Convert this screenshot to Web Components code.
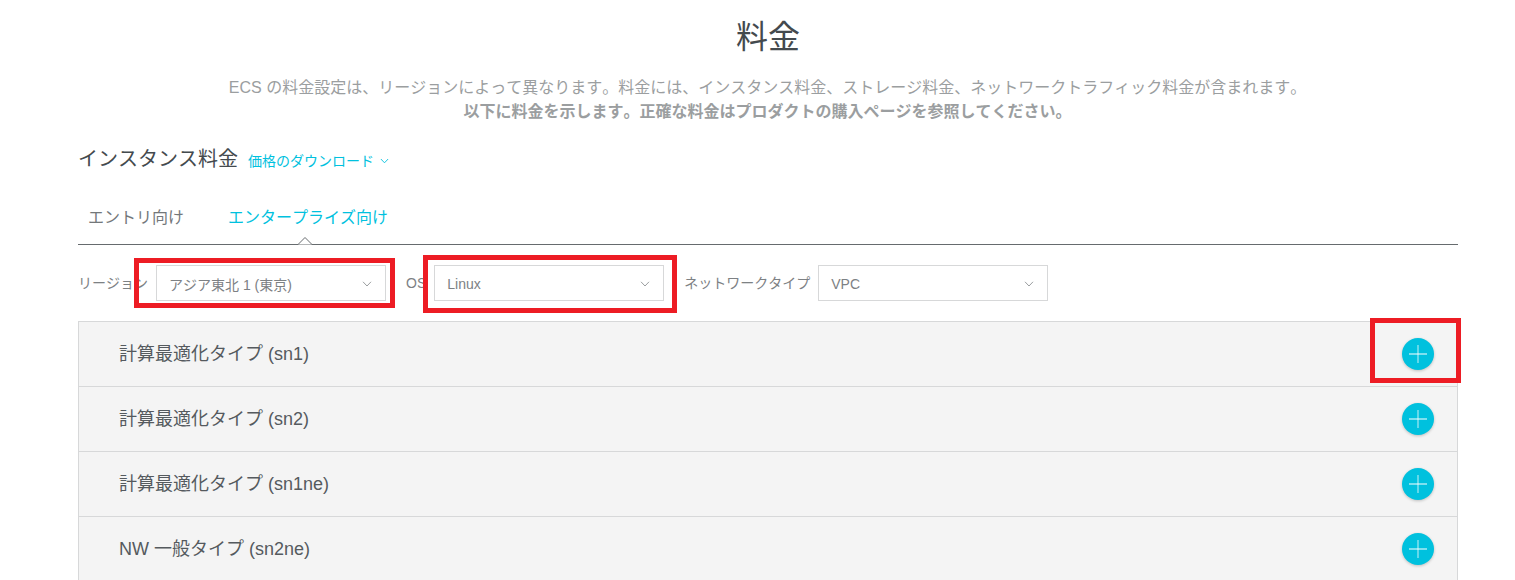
<!DOCTYPE html>
<html lang="ja">
<head>
<meta charset="utf-8">
<style>
html,body{margin:0;padding:0;background:#fff;overflow:hidden;height:580px}
body{font-family:"Liberation Sans","Noto Sans CJK JP",sans-serif;color:#373d41;font-kerning:none}
</style>
</head>
<body>
<pricing-page></pricing-page>
<script>
const chevron = (w,h,c)=>`<svg width="${w}" height="${h}" viewBox="0 0 10 6" fill="none" stroke="${c}" stroke-width="1"><path d="M1 .8 5 5 9 .8"/></svg>`;

class PriceSelect extends HTMLElement{
  constructor(){super();this.attachShadow({mode:'open'}).innerHTML=`<style>
  :host{display:flex;align-items:center;gap:8px;font-size:14px;color:#7d8184}
  .label{white-space:nowrap;line-height:20px}
  .box{box-sizing:border-box;width:230px;height:36px;border:1px solid #d7d8d9;background:#fff;display:flex;align-items:center;justify-content:space-between;padding:0 13px 0 12px;font-size:14px;color:#7d8184}
  .box span{padding-top:1px}
  svg{display:block;margin-top:1px}
  </style><span class="label"><slot name="label"></slot></span><div class="box"><span><slot></slot></span>${chevron(10,6,'#9b9ea0')}</div>`;}
}
class PriceRow extends HTMLElement{
  constructor(){super();this.attachShadow({mode:'open'}).innerHTML=`<style>
  :host{display:flex;box-sizing:border-box;height:65px;align-items:center;justify-content:space-between;padding:0 23px 0 40px;background:#f4f4f4;border-bottom:1px solid #d7d8d9;font-size:18px;color:#555a5e}
  .text{padding-bottom:4px}
  .plus{width:32px;height:32px;border-radius:50%;background:#00c1de;box-shadow:0 1px 3px rgba(0,0,0,.22);display:flex;align-items:center;justify-content:center}
  svg{display:block}
  </style><span class="text"><slot></slot></span><div class="plus"><svg width="18" height="18" viewBox="0 0 18 18"><path d="M9 0v18" stroke="#8fe3f0" stroke-width="1.4"/><path d="M0 9h18" stroke="#fff" stroke-width="1"/></svg></div>`;}
}
class RedBox extends HTMLElement{
  constructor(){super();this.attachShadow({mode:'open'}).innerHTML=`<style>
  :host{position:absolute;box-sizing:border-box;border:5px solid #ed1c24;display:block;pointer-events:none}
  </style>`;}
}
class PriceTabs extends HTMLElement{
  constructor(){super();this.attachShadow({mode:'open'}).innerHTML=`<style>
  :host{display:flex;position:relative;box-sizing:border-box;height:70px;border-bottom:1px solid #666b6e;padding-left:10px;gap:44px;font-size:16px;color:#73777a;line-height:24px;align-items:flex-start;padding-top:31px}
  .on{color:#00c1de}
  svg{position:absolute;left:218px;bottom:-1px;display:block}
  </style><span>エントリ向け</span><span class="on">エンタープライズ向け</span>
  <svg width="18" height="9" viewBox="0 0 18 9"><path d="M0 8.5h2L9 1.5l7 7h2" fill="#fff" stroke="#666b6e"/><path d="M2.5 9h13v1h-13z" fill="#fff"/></svg>`;}
}
class PricingPage extends HTMLElement{
  constructor(){super();this.attachShadow({mode:'open'}).innerHTML=`<style>
  :host{display:block;position:relative;box-sizing:border-box;width:1515px;height:580px;padding:0 57px 0 78px;overflow:hidden;font-family:"Liberation Sans","Noto Sans CJK JP",sans-serif;font-kerning:none}
  h1{margin:0;padding-top:14px;font-size:32px;font-weight:400;line-height:46px;text-align:center;color:#444a4e}
  .desc{margin:16px 0 0;text-align:center;font-size:16px;line-height:24px;color:#9b9ea0;padding-right:1px}
  .desc b{font-weight:700}
  .head{display:flex;align-items:center;gap:10px;margin-top:21px;height:30px}
  .head h2{margin:0 0 2px;font-size:20px;font-weight:400;color:#444a4e;line-height:30px}
  .link{display:flex;align-items:center;gap:6px;font-size:14px;color:#00c1de}
  .link svg{margin-top:2px}
  .filters{display:flex;gap:20px;margin-top:20px}
  .list{margin-top:20px;border:1px solid #d7d8d9;border-bottom:0}
  </style>
  <h1>料金</h1>
  <p class="desc">ECS の料金設定は、リージョンによって異なります。料金には、インスタンス料金、ストレージ料金、ネットワークトラフィック料金が含まれます。<br><b>以下に料金を示します。正確な料金はプロダクトの購入ページを参照してください。</b></p>
  <div class="head"><h2>インスタンス料金</h2><span class="link">価格のダウンロード ${chevron(9,6,'#00c1de')}</span></div>
  <price-tabs></price-tabs>
  <div class="filters">
    <price-select><span slot="label">リージョン</span>アジア東北 1 (東京)</price-select>
    <price-select><span slot="label">OS</span>Linux</price-select>
    <price-select><span slot="label">ネットワークタイプ</span>VPC</price-select>
  </div>
  <div class="list">
    <price-row>計算最適化タイプ (sn1)</price-row>
    <price-row>計算最適化タイプ (sn2)</price-row>
    <price-row>計算最適化タイプ (sn1ne)</price-row>
    <price-row>NW 一般タイプ (sn2ne)</price-row>
  </div>
  <red-box style="left:134px;top:258px;width:261px;height:50px"></red-box>
  <red-box style="left:423px;top:255px;width:254px;height:58px"></red-box>
  <red-box style="left:1370px;top:318px;width:91px;height:65px"></red-box>`;}
}
customElements.define('price-select',PriceSelect);
customElements.define('price-row',PriceRow);
customElements.define('red-box',RedBox);
customElements.define('price-tabs',PriceTabs);
customElements.define('pricing-page',PricingPage);
</script>
</body>
</html>
